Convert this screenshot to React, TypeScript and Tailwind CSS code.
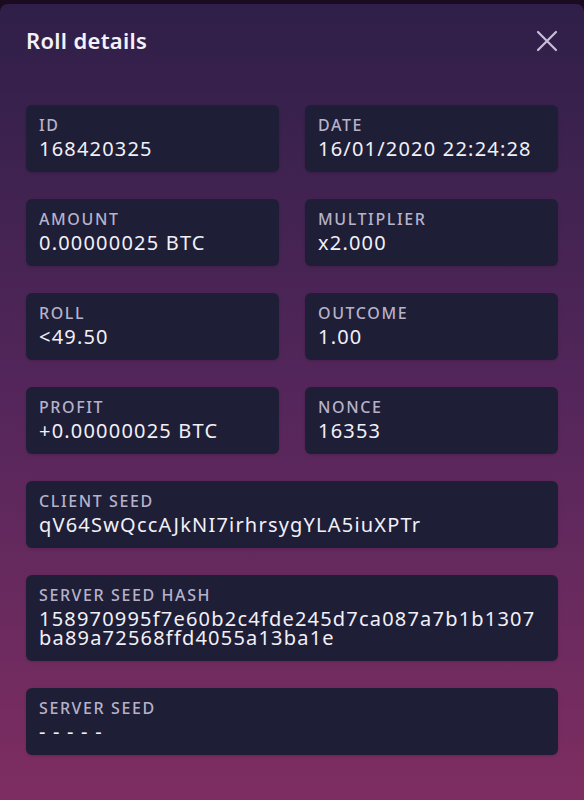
const font = { fontFamily: '"Noto Sans", "Open Sans", sans-serif' };

type Field = { label: string; value: string; wide?: boolean };

const fields: Field[] = [
  { label: 'ID', value: '168420325' },
  { label: 'DATE', value: '16/01/2020 22:24:28' },
  { label: 'AMOUNT', value: '0.00000025 BTC' },
  { label: 'MULTIPLIER', value: 'x2.000' },
  { label: 'ROLL', value: '<49.50' },
  { label: 'OUTCOME', value: '1.00' },
  { label: 'PROFIT', value: '+0.00000025 BTC' },
  { label: 'NONCE', value: '16353' },
  { label: 'CLIENT SEED', value: 'qV64SwQccAJkNI7irhrsygYLA5iuXPTr', wide: true },
  { label: 'SERVER SEED HASH', value: '158970995f7e60b2c4fde245d7ca087a7b1b1307ba89a72568ffd4055a13ba1e', wide: true },
  { label: 'SERVER SEED', value: '- - - - -', wide: true },
];

function DetailCard({ label, value, wide }: Field) {
  return (
    <div
      className={`${wide ? 'col-span-2' : ''} rounded-md bg-[#1e1e37] px-[13px] pt-[11px] pb-[14px] shadow-sm`}
    >
      <div className="text-[16px] leading-[18px] font-medium tracking-[1.6px] text-[#b7b2c9]">{label}</div>
      <div className="mt-[5px] text-[20px] leading-[19px] tracking-[1.2px] text-[#f2f0f7] break-all">{value}</div>
    </div>
  );
}

export default function App() {
  return (
    <div className="w-[584px] h-[800px] overflow-hidden bg-[#1a0b20] pt-1" style={font}>
      <div className="h-full rounded-t-lg bg-gradient-to-b from-[#2f1f48] via-[#55265b] to-[#7e2d61]">
        <div className="flex items-center justify-between px-[26px] pt-[20px]">
          <h1 className="text-[22px] font-semibold tracking-[0.3px] text-[#f4f2f8]">Roll details</h1>
          <svg width="22" height="22" viewBox="0 0 22 22">
            <path d="M2 2 L20 20 M20 2 L2 20" stroke="#c9bfd9" strokeWidth="2.2" strokeLinecap="round" />
          </svg>
        </div>
        <div className="mt-[48px] grid grid-cols-2 gap-x-[26px] gap-y-[27px] px-[26px]">
          {fields.map((f) => (
            <DetailCard key={f.label} {...f} />
          ))}
        </div>
      </div>
    </div>
  );
}
